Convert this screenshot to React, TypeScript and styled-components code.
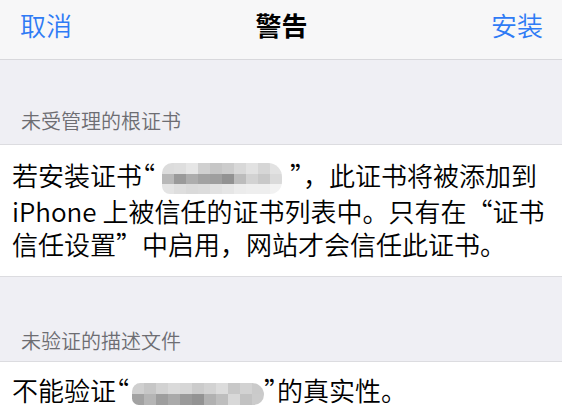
import React from 'react';
import styled, { createGlobalStyle } from 'styled-components';

const GlobalStyle = createGlobalStyle`
  html, body {
    margin: 0;
    padding: 0;
    background: #efeff4;
  }
  body {
    font-family: "Noto Sans CJK SC", "Noto Sans", sans-serif;
    -webkit-font-smoothing: antialiased;
  }
`;

const Page = styled.div`
  width: 562px;
  height: 420px;
  overflow: hidden;
  background: #efeff4;
`;

const NavBar = styled.div`
  height: 51px;
  padding: 8px 19px 0 20px;
  display: grid;
  grid-template-columns: 1fr auto 1fr;
  align-items: start;
  background: #f7f7f8;
  border-bottom: 1px solid #d8d8dc;
`;

const NavButton = styled.button<{ $end?: boolean }>`
  justify-self: ${p => (p.$end ? 'end' : 'start')};
  padding: 0;
  border: 0;
  background: none;
  font-family: inherit;
  font-size: 26px;
  line-height: 33px;
  font-weight: 350;
  color: #2f7bf5;
`;

const NavTitle = styled.div`
  font-size: 26px;
  line-height: 33px;
  font-weight: 600;
  color: #000;
`;

const SectionHeader = styled.div<{ $bottom: number }>`
  height: 84px;
  box-sizing: border-box;
  display: flex;
  align-items: flex-end;
  padding: 0 21px ${p => p.$bottom}px;
  font-size: 20px;
  line-height: 24px;
  font-weight: 350;
  color: #6d6d72;
`;

const Card = styled.div<{ $top: number; $bottom: number }>`
  background: #fff;
  border-top: 1px solid #dcdce0;
  border-bottom: 1px solid #dcdce0;
  padding: ${p => p.$top}px 0 ${p => p.$bottom}px 12px;
`;

const Line = styled.div`
  font-size: 26px;
  line-height: 33px;
  font-weight: 350;
  color: #000;
  white-space: nowrap;
`;

const Punct = styled.span<{ $half?: boolean }>`
  font-feature-settings: ${p => (p.$half ? '"halt"' : 'normal')};
`;

const Blur = styled.span<{ $cols: number; $left: number; $right: number; $h: number }>`
  display: inline-grid;
  grid-template-columns: repeat(${p => p.$cols}, 1fr);
  grid-auto-rows: 1fr;
  height: ${p => p.$h}px;
  margin: 0 ${p => p.$right}px 0 ${p => p.$left}px;
  vertical-align: middle;
  border-radius: 10px 14px 12px 8px;
  overflow: hidden;
  filter: blur(0.4px);
`;

const Cell = styled.span<{ $tone: string }>`
  width: 12px;
  background: ${p => p.$tone};
`;

const blurOne = [
  ['#dcdcdc', '#dedede', '#e6e6e6', '#d0d0d0', '#c6c6c6', '#cccccc', '#d8d8d8', '#e2e2e2', '#d6d6d6', '#e2e2e2'],
  ['#b8b8b8', '#9a9a9a', '#adadad', '#a2a2a2', '#9f9f9f', '#929292', '#bcbcbc', '#d2d2d2', '#c8c8c8', '#dadada'],
  ['#e4e4e4', '#dedede', '#dadada', '#dcdcdc', '#e2e2e2', '#e6e6e6', '#ececec', '#eeeeee', '#eeeeee', '#f2f2f2'],
];

const blurTwo = [
  ['#cfcfcf', '#c6c6c6', '#d2d2d2', '#dadada', '#d6d6d6', '#cbcbcb', '#d2d2d2', '#dcdcdc', '#c8c8c8', '#d2d2d2', '#cacaca'],
  ['#a2a2a2', '#b5b5b5', '#9e9e9e', '#aaaaaa', '#9a9a9a', '#939393', '#b1b1b1', '#bebebe', '#d8d8d8', '#c2c2c2', '#cbcbcb'],
];

const Pixelated = ({ rows, left, right, height }: { rows: string[][]; left: number; right: number; height: number }) => (
  <Blur $cols={rows[0].length} $left={left} $right={right} $h={height}>
    {rows.flat().map((tone, i) => (
      <Cell key={i} $tone={tone} />
    ))}
  </Blur>
);

export default function App() {
  return (
    <Page>
      <GlobalStyle />
      <NavBar>
        <NavButton>取消</NavButton>
        <NavTitle>警告</NavTitle>
        <NavButton $end>安装</NavButton>
      </NavBar>

      <SectionHeader $bottom={11}>未受管理的根证书</SectionHeader>
      <Card $top={13} $bottom={16}>
        <Line>
          若安装证书<Punct $half>“</Punct>
          <Pixelated rows={blurOne} left={7} right={8} height={31} />
          <Punct $half>”</Punct>，此证书将被添加到
        </Line>
        <Line>iPhone 上被信任的证书列表中。只有在“证书</Line>
        <Line>信任设置”中启用，网站才会信任此证书。</Line>
      </Card>

      <SectionHeader $bottom={8}>未验证的描述文件</SectionHeader>
      <Card $top={11} $bottom={16}>
        <Line>
          不能验证<Punct $half>“</Punct>
          <Pixelated rows={blurTwo} left={3} right={0} height={22} />
          <Punct $half>”</Punct>的真实性。
        </Line>
      </Card>
    </Page>
  );
}
